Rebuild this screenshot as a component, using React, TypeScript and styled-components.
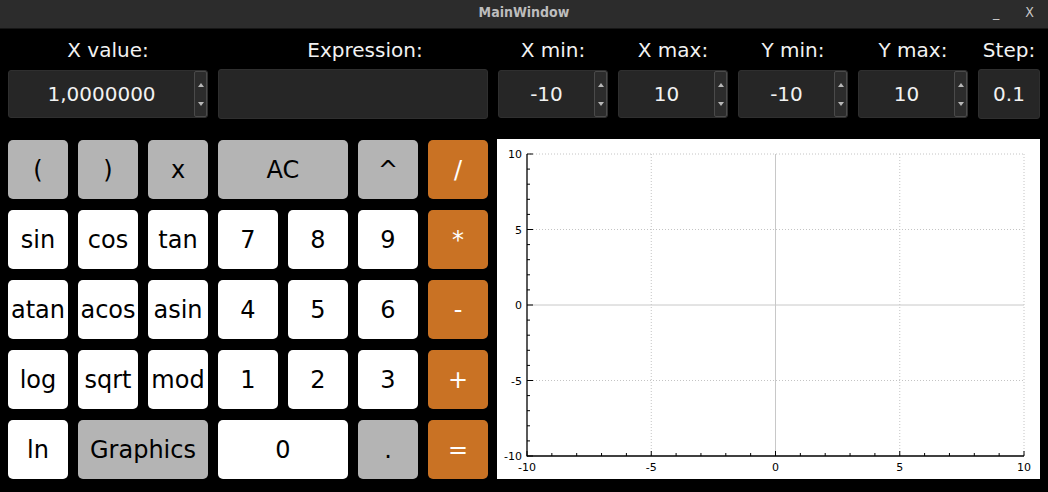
import styled, { createGlobalStyle } from "styled-components";

const GlobalStyle = createGlobalStyle`
  html, body {
    margin: 0;
    padding: 0;
    background: #000;
  }
  body {
    font-family: "DejaVu Sans", "Noto Sans", sans-serif;
  }
`;

type KeyKind = "grey" | "white" | "orange";

const keys: { label: string; kind: KeyKind; span?: number }[] = [
  { label: "(", kind: "grey" },
  { label: ")", kind: "grey" },
  { label: "x", kind: "grey" },
  { label: "AC", kind: "grey", span: 2 },
  { label: "^", kind: "grey" },
  { label: "/", kind: "orange" },
  { label: "sin", kind: "white" },
  { label: "cos", kind: "white" },
  { label: "tan", kind: "white" },
  { label: "7", kind: "white" },
  { label: "8", kind: "white" },
  { label: "9", kind: "white" },
  { label: "*", kind: "orange" },
  { label: "atan", kind: "white" },
  { label: "acos", kind: "white" },
  { label: "asin", kind: "white" },
  { label: "4", kind: "white" },
  { label: "5", kind: "white" },
  { label: "6", kind: "white" },
  { label: "-", kind: "orange" },
  { label: "log", kind: "white" },
  { label: "sqrt", kind: "white" },
  { label: "mod", kind: "white" },
  { label: "1", kind: "white" },
  { label: "2", kind: "white" },
  { label: "3", kind: "white" },
  { label: "+", kind: "orange" },
  { label: "ln", kind: "white" },
  { label: "Graphics", kind: "grey", span: 2 },
  { label: "0", kind: "white", span: 2 },
  { label: ".", kind: "grey" },
  { label: "=", kind: "orange" },
];

const ranges = [
  { label: "X min:", value: "-10" },
  { label: "X max:", value: "10" },
  { label: "Y min:", value: "-10" },
  { label: "Y max:", value: "10" },
];

const SpinInput = ({ value }: { value: string }) => (
  <SpinBox>
    <SpinValue>{value}</SpinValue>
    <SpinArrows>
      <Arrow $dir="up" />
      <Arrow $dir="down" />
    </SpinArrows>
  </SpinBox>
);

// chart geometry, in the panel's own pixels
const W = 543;
const H = 340;
const L = 30;
const R = 527;
const T = 15;
const B = 317;
const sx = (v: number) => L + ((v + 10) / 20) * (R - L);
const sy = (v: number) => T + ((10 - v) / 20) * (B - T);
const units = Array.from({ length: 21 }, (_, i) => i - 10);
const majors = [-10, -5, 0, 5, 10];

const Plot = () => (
  <svg width={W} height={H} viewBox={`0 0 ${W} ${H}`}>
    {[-5, 5, 10].map((v) => (
      <line key={"gx" + v} x1={sx(v)} x2={sx(v)} y1={T} y2={B} stroke="#c4c4c4" strokeDasharray="1 2" />
    ))}
    {[-5, 5, 10].map((v) => (
      <line key={"gy" + v} x1={L} x2={R} y1={sy(v)} y2={sy(v)} stroke="#c4c4c4" strokeDasharray="1 2" />
    ))}
    <line x1={sx(0)} x2={sx(0)} y1={T} y2={B} stroke="#c8c8c8" />
    <line x1={L} x2={R} y1={sy(0)} y2={sy(0)} stroke="#c8c8c8" />

    <line x1={L} x2={L} y1={T} y2={B + 0.5} stroke="#000" strokeWidth={1.3} />
    <line x1={L} x2={R} y1={B} y2={B} stroke="#000" strokeWidth={1.3} />
    {units.map((v) => {
      const big = v % 5 === 0;
      return (
        <g key={"t" + v}>
          <line x1={L} x2={L + (big ? 6 : 3)} y1={sy(v)} y2={sy(v)} stroke="#000" />
          <line x1={sx(v)} x2={sx(v)} y1={B} y2={B - (big ? 5 : 3)} stroke="#000" />
        </g>
      );
    })}
    {majors.map((v) => (
      <text
        key={"ly" + v}
        x={L - 5}
        y={sy(v) + 4}
        textAnchor="end"
        fontSize={11}
        fontFamily="DejaVu Sans"
        fill="#000"
      >
        {v}
      </text>
    ))}
    {majors.map((v) => (
      <text
        key={"lx" + v}
        x={sx(v)}
        y={B + 15}
        textAnchor="middle"
        fontSize={11}
        fontFamily="DejaVu Sans"
        fill="#000"
      >
        {v}
      </text>
    ))}
  </svg>
);

const App = () => {
  return (
    <Window>
      <GlobalStyle />
      <TitleBar>
        <Title>MainWindow</Title>
        <WinControls>
          <WinButton>_</WinButton>
          <WinButton>X</WinButton>
        </WinControls>
      </TitleBar>

      <Content>
        <FieldsRow>
          <Field $w={200}>
            <FieldLabel>X value:</FieldLabel>
            <SpinInput value="1,0000000" />
          </Field>
          <Field $w={270}>
            <FieldLabel $shift={12}>Expression:</FieldLabel>
            <LineEdit />
          </Field>
          {ranges.map((r) => (
            <Field $w={110} key={r.label}>
              <FieldLabel>{r.label}</FieldLabel>
              <SpinInput value={r.value} />
            </Field>
          ))}
          <Field $w={62}>
            <FieldLabel>Step:</FieldLabel>
            <LineEdit>0.1</LineEdit>
          </Field>
        </FieldsRow>

        <Main>
          <Keypad>
            {keys.map((k) => (
              <Key key={k.label} $kind={k.kind} $span={k.span ?? 1}>
                {k.label}
              </Key>
            ))}
          </Keypad>
          <ChartPanel>
            <Plot />
          </ChartPanel>
        </Main>
      </Content>
    </Window>
  );
};

const Window = styled.div`
  width: 1048px;
  height: 492px;
  display: flex;
  flex-direction: column;
  background: #000;
  overflow: hidden;
`;

const TitleBar = styled.div`
  height: 28px;
  flex-shrink: 0;
  background: #2c2c2c;
  border-bottom: 1px solid #161616;
  position: relative;
  display: flex;
  align-items: center;
  justify-content: center;
`;

const Title = styled.span`
  font-family: "DejaVu Sans Condensed", "DejaVu Sans", sans-serif;
  font-weight: bold;
  font-size: 14px;
  color: #bdbdbd;
  margin-top: -4px;
`;

const WinControls = styled.div`
  position: absolute;
  right: 14px;
  top: 0;
  height: 24px;
  display: flex;
  align-items: center;
  gap: 26px;
`;

const WinButton = styled.span`
  font-family: "DejaVu Sans Condensed", "DejaVu Sans", sans-serif;
  font-size: 14px;
  color: #c8c8c8;
`;

const Content = styled.div`
  padding: 9px 8px 0 8px;
  display: flex;
  flex-direction: column;
`;

const FieldsRow = styled.div`
  display: flex;
  gap: 10px;
`;

const Field = styled.div<{ $w: number }>`
  width: ${(p) => p.$w}px;
  display: flex;
  flex-direction: column;
  gap: 8px;
`;

const FieldLabel = styled.div<{ $shift?: number }>`
  height: 24px;
  line-height: 24px;
  font-size: 20px;
  color: #f2f2f2;
  text-align: center;
  white-space: nowrap;
  padding-left: ${(p) => (p.$shift ?? 0) * 2}px;
`;

const SpinBox = styled.div`
  height: 48px;
  box-sizing: border-box;
  background: #262626;
  border: 1px solid #2f2f2f;
  border-radius: 3px;
  display: flex;
  align-items: stretch;
`;

const SpinValue = styled.div`
  flex: 1;
  display: flex;
  align-items: center;
  justify-content: center;
  font-size: 20px;
  color: #f2f2f2;
`;

const SpinArrows = styled.div`
  width: 13px;
  box-sizing: border-box;
  border: 1px solid #4a4a4a;
  border-radius: 2px;
  background: #2c2c2c;
  display: flex;
  flex-direction: column;
  justify-content: space-between;
  align-items: center;
  padding: 11px 0 10px;
`;

const Arrow = styled.div<{ $dir: "up" | "down" }>`
  width: 0;
  height: 0;
  border-left: 3.5px solid transparent;
  border-right: 3.5px solid transparent;
  ${(p) =>
    p.$dir === "up"
      ? "border-bottom: 4px solid #b8b8b8;"
      : "border-top: 4px solid #b8b8b8;"}
`;

const LineEdit = styled.div`
  height: 50px;
  margin-top: -1px;
  box-sizing: border-box;
  background: #262626;
  border: 1px solid #2f2f2f;
  border-radius: 3px;
  display: flex;
  align-items: center;
  justify-content: center;
  font-size: 20px;
  color: #f2f2f2;
`;

const Main = styled.div`
  margin-top: 20px;
  display: flex;
  gap: 9px;
`;

const Keypad = styled.div`
  padding-top: 1px;
  display: grid;
  grid-template-columns: repeat(7, 60px);
  grid-auto-rows: 59px;
  column-gap: 10px;
  row-gap: 11px;
`;

const keyColors: Record<KeyKind, { bg: string; fg: string }> = {
  grey: { bg: "#b4b4b4", fg: "#000" },
  white: { bg: "#ffffff", fg: "#000" },
  orange: { bg: "#c97224", fg: "#ffffff" },
};

const Key = styled.button<{ $kind: KeyKind; $span: number }>`
  grid-column: span ${(p) => p.$span};
  border: none;
  border-radius: 5px;
  padding: 0;
  background: ${(p) => keyColors[p.$kind].bg};
  color: ${(p) => keyColors[p.$kind].fg};
  font-family: "DejaVu Sans", sans-serif;
  font-size: 24px;
  white-space: nowrap;
  overflow: visible;
  cursor: pointer;
`;

const ChartPanel = styled.div`
  width: 543px;
  height: 340px;
  background: #fff;
  svg {
    display: block;
  }
`;

export default App;
